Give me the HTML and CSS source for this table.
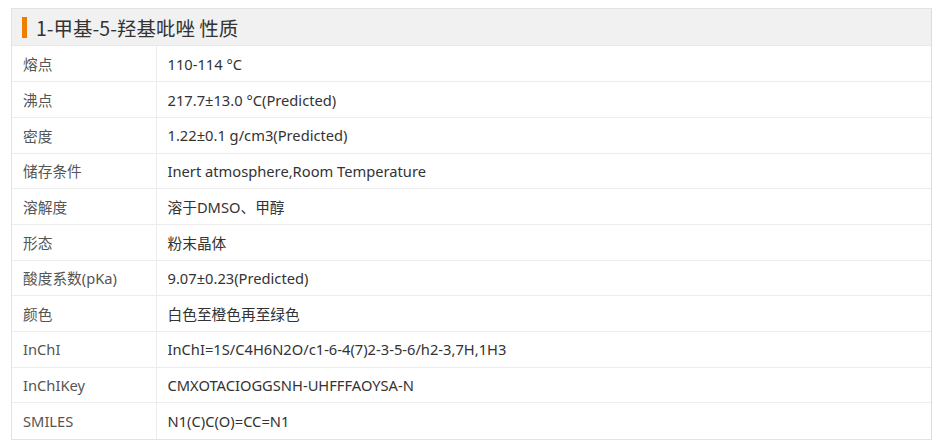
FILE: index.html
```html
<!DOCTYPE html>
<html lang="zh">
<head>
<meta charset="utf-8">
<link rel="stylesheet" href="styles.css">
</head>
<body>
<div class="box">
  <div class="head"><span class="bar"></span><span class="title">1-甲基-5-羟基吡唑 性质</span></div>
  <table class="props">
    <tr><td class="k">熔点</td><td class="v">110-114 °C</td></tr>
    <tr><td class="k">沸点</td><td class="v">217.7±13.0 °C(Predicted)</td></tr>
    <tr><td class="k">密度</td><td class="v">1.22±0.1 g/cm3(Predicted)</td></tr>
    <tr><td class="k">储存条件</td><td class="v">Inert atmosphere,Room Temperature</td></tr>
    <tr><td class="k">溶解度</td><td class="v">溶于DMSO、甲醇</td></tr>
    <tr><td class="k">形态</td><td class="v">粉末晶体</td></tr>
    <tr><td class="k">酸度系数(pKa)</td><td class="v">9.07±0.23(Predicted)</td></tr>
    <tr><td class="k">颜色</td><td class="v">白色至橙色再至绿色</td></tr>
    <tr><td class="k">InChI</td><td class="v">InChI=1S/C4H6N2O/c1-6-4(7)2-3-5-6/h2-3,7H,1H3</td></tr>
    <tr><td class="k">InChIKey</td><td class="v">CMXOTACIOGGSNH-UHFFFAOYSA-N</td></tr>
    <tr><td class="k">SMILES</td><td class="v">N1(C)C(O)=CC=N1</td></tr>
  </table>
</div>
</body>
</html>
```
FILE: styles.css
```css
html, body { margin: 0; padding: 0; background: #fff; }
body {
  padding: 8px 0 0 11px;
  font-family: "Noto Sans", "Noto Sans CJK SC", sans-serif;
  color: #333;
}
.box {
  box-sizing: border-box;
  width: 921px;
  border: 1px solid #e3e3e3;
  border-right-color: #dcdcdc;
}
.head {
  height: 36px;
  background: #f1f1f1;
  display: flex;
  align-items: center;
  padding-left: 10px;
  gap: 9px;
  border-bottom: 1px solid #e8e8e8;
}
.bar {
  width: 5px;
  height: 21px;
  background: #f07c00;
}
.title {
  font-size: 19.5px;
  color: #333;
  font-family: "Noto Sans CJK SC", sans-serif;
}
.props {
  width: 100%;
  border-collapse: collapse;
  font-size: 14.7px;
}
.props td {
  height: 35.7px;
  padding: 0 0 0 11px;
  border-top: 1px solid #ececec;
  box-sizing: border-box;
}
.props tr:first-child td { border-top: none; }
.props .k {
  width: 144px;
  color: #555;
  border-right: 1px solid #ececec;
}
.props .v { color: #333; }
```
